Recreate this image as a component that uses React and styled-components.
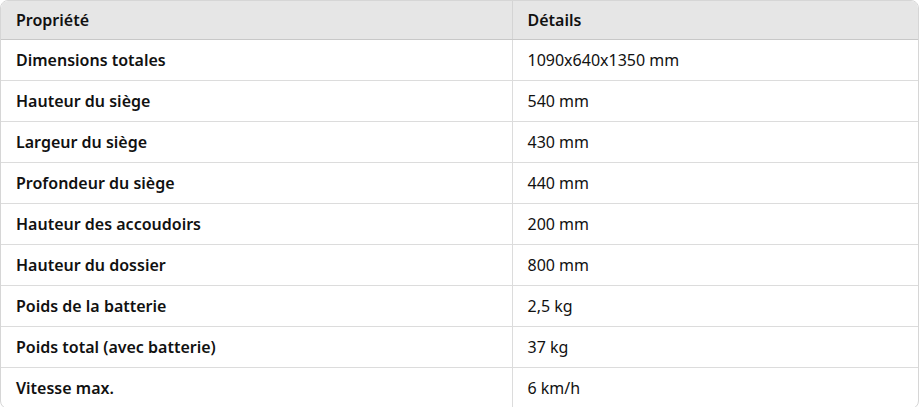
import styled, { createGlobalStyle } from 'styled-components'

const GlobalStyle = createGlobalStyle`
  html, body {
    margin: 0;
    padding: 0;
    background: #ffffff;
  }
  body {
    font-family: "Noto Sans", "Open Sans", sans-serif;
    color: #111111;
  }
`

const specs = [
  ['Dimensions totales', '1090x640x1350 mm'],
  ['Hauteur du siège', '540 mm'],
  ['Largeur du siège', '430 mm'],
  ['Profondeur du siège', '440 mm'],
  ['Hauteur des accoudoirs', '200 mm'],
  ['Hauteur du dossier', '800 mm'],
  ['Poids de la batterie', '2,5 kg'],
  ['Poids total (avec batterie)', '37 kg'],
  ['Vitesse max.', '6 km/h'],
]

export default function App() {
  return (
    <>
      <GlobalStyle />
      <TableWrap>
        <SpecTable>
          <colgroup>
            <col style={{ width: 511 }} />
            <col />
          </colgroup>
          <thead>
            <tr>
              <HeadCell>Propriété</HeadCell>
              <HeadCell>Détails</HeadCell>
            </tr>
          </thead>
          <tbody>
            {specs.map(([label, value], i) => (
              <Row key={label} $last={i === specs.length - 1}>
                <Cell $label>{label}</Cell>
                <Cell>{value}</Cell>
              </Row>
            ))}
          </tbody>
        </SpecTable>
      </TableWrap>
    </>
  )
}

const TableWrap = styled.div`
  width: 919px;
  border: 1px solid #d6d6d6;
  border-radius: 8px;
  overflow: hidden;
  box-sizing: border-box;
`

const SpecTable = styled.table`
  width: 100%;
  border-collapse: collapse;
  table-layout: fixed;
  font-size: 16px;
`

const HeadCell = styled.th`
  height: 38px;
  padding: 0 15px;
  text-align: left;
  font-weight: 600;
  background: #e6e6e6;
  border-bottom: 1px solid #c8c8c8;
  border-right: 1px solid #d4d4d4;
  box-sizing: border-box;

  &:last-child {
    border-right: none;
  }
`

const Row = styled.tr`
  border-bottom: ${p => (p.$last ? 'none' : '1px solid #dcdcdc')};
`

const Cell = styled.td`
  height: 41px;
  padding: 0 15px;
  font-weight: ${p => (p.$label ? 600 : 400)};
  border-right: 1px solid #dcdcdc;
  box-sizing: border-box;

  &:last-child {
    border-right: none;
  }
`
